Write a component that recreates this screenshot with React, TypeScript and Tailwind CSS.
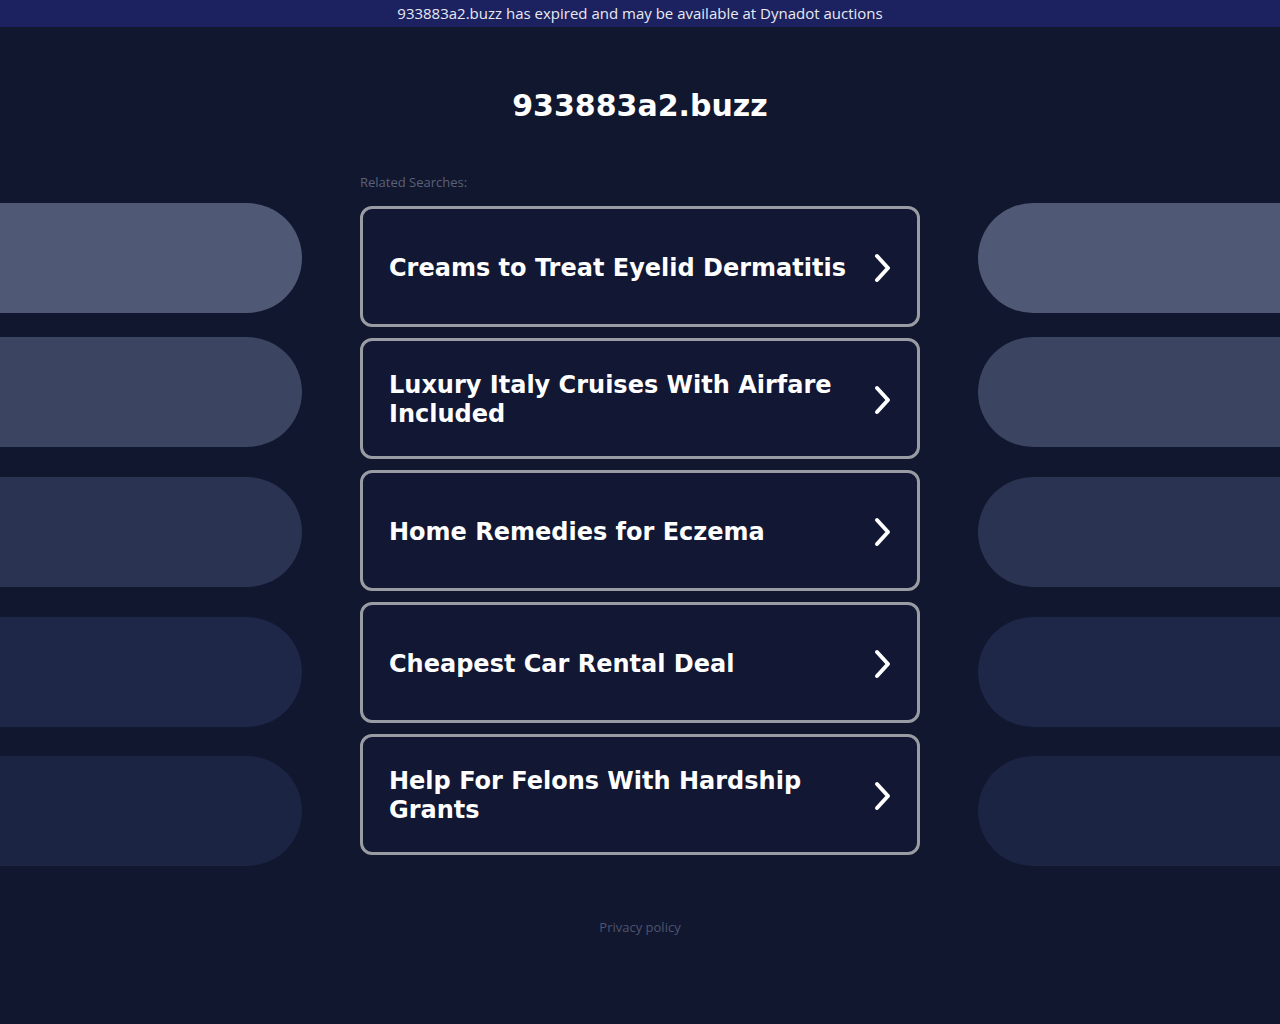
import React from "react";

const searches = [
  "Creams to Treat Eyelid Dermatitis",
  "Luxury Italy Cruises With Airfare Included",
  "Home Remedies for Eczema",
  "Cheapest Car Rental Deal",
  "Help For Felons With Hardship Grants",
];

function Pills({ side }: { side: "left" | "right" }) {
  const round = side === "left" ? "rounded-r-[55px]" : "rounded-l-[55px]";
  return (
    <div className="w-[302px] flex flex-col pt-[33px]">
      <div className={`h-[110px] bg-[#4f5874] ${round}`} />
      <div className={`h-[110px] mt-[24px] bg-[#3b4461] ${round}`} />
      <div className={`h-[110px] mt-[30px] bg-[#2a3352] ${round}`} />
      <div className={`h-[110px] mt-[30px] bg-[#1e2747] ${round}`} />
      <div className={`h-[110px] mt-[29px] bg-[#1c2443] ${round}`} />
    </div>
  );
}

function Chevron() {
  return (
    <svg width="22" height="30" viewBox="0 0 22 30" className="shrink-0">
      <polyline
        points="6,3 17,15 6,27"
        fill="none"
        stroke="white"
        strokeWidth="4"
        strokeLinecap="round"
        strokeLinejoin="round"
      />
    </svg>
  );
}

export default function App() {
  return (
    <div className="min-h-[1024px] bg-[#11172e] text-white">
      <div className="h-[27px] bg-[#1c2160] flex items-center justify-center text-[15px] text-[#e8e9f2] font-['Open_Sans',sans-serif]">
        933883a2.buzz has expired and may be available at Dynadot auctions
      </div>
      <h1 className="text-center pt-[61px] text-[30px] font-bold leading-[36px] font-['DejaVu_Sans',sans-serif]">
        933883a2.buzz
      </h1>
      <div className="flex justify-between mt-[46px]">
        <Pills side="left" />
        <div className="w-[560px]">
          <p className="text-[13px] leading-[16px] text-[#5b6179] font-['Open_Sans',sans-serif] pt-[4px]">
            Related Searches:
          </p>
          <div className="flex flex-col gap-[11px] mt-[16px]">
            {searches.map((s) => (
              <a
                key={s}
                href="#"
                className="h-[121px] border-[3px] border-[#9a9ca3] rounded-[12px] bg-[#121733] flex items-center justify-between pl-[26px] pr-[24px] pt-[3px]"
              >
                <span className="text-[24px] leading-[29px] font-bold font-['DejaVu_Sans',sans-serif] pr-4">
                  {s}
                </span>
                <Chevron />
              </a>
            ))}
          </div>
        </div>
        <Pills side="right" />
      </div>
      <p className="text-center mt-[52px] text-[13px] text-[#4d5470] font-['Open_Sans',sans-serif]">
        Privacy policy
      </p>
    </div>
  );
}
